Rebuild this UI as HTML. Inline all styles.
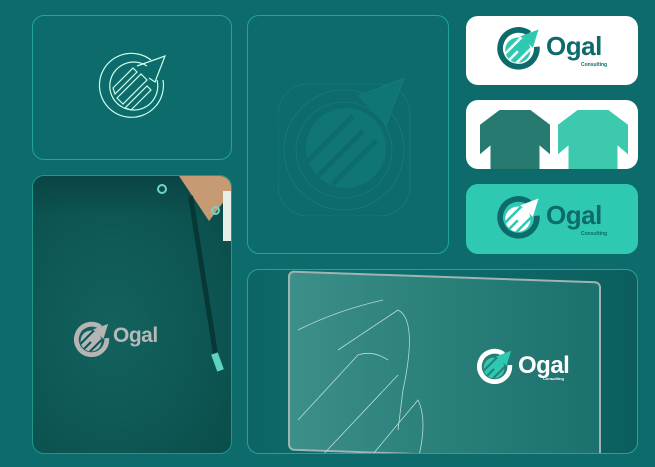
<!DOCTYPE html><html><head><style>
*{margin:0;padding:0;box-sizing:border-box}
body{width:655px;height:467px;background:#0d6b6b;position:relative;overflow:hidden;font-family:"Liberation Sans",sans-serif}
.c{position:absolute;border-radius:12px;overflow:hidden}
.ol{border:1px solid #22a596}
.og{font-weight:bold;letter-spacing:-0.5px;position:absolute}
.cs{font-size:5px;font-weight:bold;position:absolute}
</style></head><body>
<svg width="0" height="0" style="position:absolute"><defs>
<clipPath id="cp"><circle cx="19" cy="21" r="11"/></clipPath>
<symbol id="lg" viewBox="0 0 40 40">
<path d="M29 6.5 A16 16 0 1 0 35.5 18" fill="none" stroke="currentColor" stroke-width="5"/>
<g clip-path="url(#cp)"><rect x="0" y="0" width="40" height="40" fill="var(--a)"/>
<path d="M4 28 L22 10 M8 33 L26 15 M13 37 L31 19" stroke="var(--b)" stroke-width="2.2"/></g>
<path d="M21 9 L37 3 L32 19 L28 15 L20 23 L17 20 L25 12Z" fill="var(--a)"/>
</symbol>
<symbol id="lo" viewBox="0 0 40 40">
<path d="M29 7 A16 16 0 1 0 35 17" fill="none" stroke="#cfe" stroke-width="0.6"/>
<path d="M27 10 A12 12 0 1 0 32 17" fill="none" stroke="#cfe" stroke-width="0.6"/>
<path d="M12 26 L24 14 L27 17 L15 29Z M10 21 L20 11 L22 13 L11 24Z M16 31 L27 20 L29 22 L19 32Z M22 10 L36 5 L31 18 L28 16" fill="none" stroke="#cfe" stroke-width="0.6"/>
</symbol></defs></svg>

<div class="c ol" style="left:32px;top:15px;width:200px;height:145px">
<svg style="position:absolute;left:60px;top:30px" width="80" height="80"><use href="#lo"/></svg></div>

<div class="c ol" style="left:247px;top:15px;width:202px;height:239px">
<svg style="position:absolute;left:30px;top:50px" width="140" height="150" viewBox="0 0 140 150" fill="none" stroke="#1a8080" stroke-width="0.6">
<rect x="0" y="18" width="132" height="132" rx="30"/><circle cx="66" cy="84" r="60"/><circle cx="66" cy="84" r="48"/>
<circle cx="68" cy="82" r="40" fill="#107575" stroke="none"/><path d="M80 30 L126 12 L108 60" fill="#107575"/>
<path d="M40 110 L85 65 M55 118 L98 75 M30 95 L75 50" stroke="#0d6b6b" stroke-width="5"/></svg></div>

<div class="c" style="left:32px;top:175px;width:200px;height:279px;background:radial-gradient(ellipse at 40% 55%,#13625e,#0d5552 60%,#0a4a47);border:1px solid #1a9a8a">
<div style="position:absolute;left:0;top:0;width:200px;height:40px;background:linear-gradient(#0a4544,transparent)"></div>
<div style="position:absolute;left:140px;top:0;width:60px;height:45px;background:#c69a72;clip-path:polygon(10% 0,100% 0,100% 30%,60% 100%,30% 40%)"></div>
<div style="position:absolute;left:190px;top:15px;width:12px;height:50px;background:#e8eee8"></div>
<div style="position:absolute;left:124px;top:8px;border:2px solid #6fd6c6;border-radius:50%;width:10px;height:10px"></div>
<div style="position:absolute;left:178px;top:30px;border:2px solid #6fd6c6;border-radius:50%;width:9px;height:9px"></div>
<div style="position:absolute;left:155px;top:20px;width:5px;height:165px;background:#083836;transform:rotate(-9deg);transform-origin:top"></div>
<div style="position:absolute;left:181px;top:177px;width:7px;height:18px;background:#5fd2c0;transform:rotate(-20deg)"></div>
<svg style="position:absolute;left:40px;top:145px;color:#b5b5b5;--a:#b5b5b5;--b:#0d5552" width="38" height="38"><use href="#lg"/></svg>
<div class="og" style="left:80px;top:148px;font-size:21px;color:#b8b8b8">Ogal</div>
</div>

<div class="c" style="left:466px;top:16px;width:172px;height:69px;background:#fff;color:#0d6b6b;--a:#2ec9b0;--b:#fff">
<svg style="position:absolute;left:30px;top:10px" width="46" height="46"><use href="#lg"/></svg>
<div class="og" style="left:80px;top:15px;font-size:26px;color:#0d6b6b">Ogal</div>
<div class="cs" style="left:115px;top:46px;color:#0d6b6b">Consulting</div></div>

<div class="c" style="left:466px;top:100px;width:172px;height:69px;background:#fff">
<div style="position:absolute;left:14px;top:10px;width:70px;height:59px;background:#267a70;clip-path:polygon(28% 0,72% 0,100% 25%,100% 75%,85% 60%,85% 100%,15% 100%,15% 60%,0 75%,0 25%)"></div>
<div style="position:absolute;left:92px;top:10px;width:70px;height:59px;background:#3cc9ad;clip-path:polygon(28% 0,72% 0,100% 25%,100% 75%,85% 60%,85% 100%,15% 100%,15% 60%,0 75%,0 25%)"></div></div>

<div class="c" style="left:466px;top:184px;width:172px;height:70px;background:#2ec9b0;color:#0d6b6b;--a:#fff;--b:#2ec9b0">
<svg style="position:absolute;left:30px;top:11px" width="46" height="46"><use href="#lg"/></svg>
<div class="og" style="left:80px;top:16px;font-size:26px;color:#0d6b6b">Ogal</div>
<div class="cs" style="left:115px;top:47px;color:#0d6b6b">Consulting</div></div>

<div class="c ol" style="left:247px;top:269px;width:391px;height:185px;background:linear-gradient(90deg,#0c6464,#0f7070 30%,#0c5e5e)">
<div style="position:absolute;left:40px;top:6px;width:313px;height:180px;border:2px solid #9fb5b3;border-radius:6px;background:linear-gradient(90deg,#3d8f89,#2a7f79 50%,#1c716d);transform:skewY(2deg)"></div>
<svg style="position:absolute;left:50px;top:20px" width="170" height="170" fill="none" stroke="#b7dcd6" stroke-width="0.8"><path d="M0 40 Q40 20 85 10 M40 60 L100 20 Q120 30 105 100 L100 140 M0 130 L60 65 Q75 60 90 70 M20 170 L100 85 M70 170 L120 110 Q130 130 120 170"/></svg>
<svg style="position:absolute;left:228px;top:78px;color:#fff;--a:#2ec9b0;--b:#2a7f79" width="38" height="38"><use href="#lg"/></svg>
<div class="og" style="left:270px;top:82px;font-size:24px;color:#fff">Ogal</div>
<div class="cs" style="left:295px;top:106px;color:#fff;font-size:4px">Consulting</div></div>
</body></html>
